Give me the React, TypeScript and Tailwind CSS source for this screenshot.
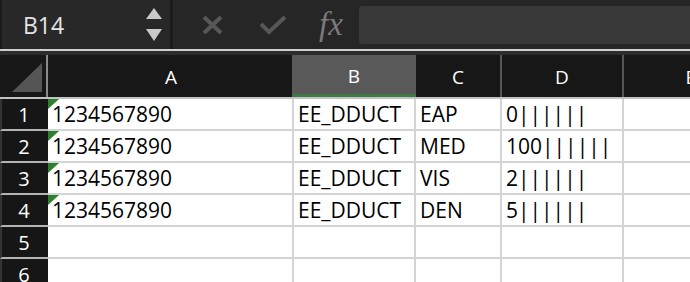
import React from "react";

// Rows of the sheet
interface SheetRow {
  id: string;
  amount: string;
  code: string;
  plan: string;
  value: string;
}

const rows: SheetRow[] = [
  { id: "1", amount: "1234567890", code: "EE_DDUCT", plan: "EAP", value: "0||||||" },
  { id: "2", amount: "1234567890", code: "EE_DDUCT", plan: "MED", value: "100||||||" },
  { id: "3", amount: "1234567890", code: "EE_DDUCT", plan: "VIS", value: "2||||||" },
  { id: "4", amount: "1234567890", code: "EE_DDUCT", plan: "DEN", value: "5||||||" },
  { id: "5", amount: "", code: "", plan: "", value: "" },
  { id: "6", amount: "", code: "", plan: "", value: "" },
];

const font = { fontFamily: '"Open Sans", "Liberation Sans", sans-serif' };

const FormulaBar = () => (
  <div className="flex h-[49px] bg-[#262626]">
    <div className="flex w-[170px] items-center border-l-2 border-[#1a1a1a] bg-[#282828] pl-[21px] pr-[8px]">
      <span className="pt-[2px] text-[23px] text-[#e4e4e4]">B14</span>
      <div className="ml-auto flex flex-col items-center gap-[10px]">
        <svg width="16" height="11" viewBox="0 0 16 11">
          <path d="M8 0 L16 11 L0 11 Z" fill="#c9c9c9" />
        </svg>
        <svg width="16" height="12" viewBox="0 0 16 12">
          <path d="M0 0 L16 0 L8 12 Z" fill="#c9c9c9" />
        </svg>
      </div>
    </div>
    <div className="w-[3px] bg-[#1b1b1b]" />
    <div className="flex flex-1 items-center">
      <svg className="ml-[29px]" width="21" height="18" viewBox="0 0 21 18">
        <path d="M2 1 L19 17 M19 1 L2 17" stroke="#575757" strokeWidth="4" />
      </svg>
      <svg className="ml-[36px]" width="28" height="20" viewBox="0 0 28 20">
        <path d="M2 9 L10 17 L26 2" stroke="#575757" strokeWidth="4" fill="none" />
      </svg>
      <span
        className="ml-[32px] text-[33px] italic leading-none text-[#7a7a7a]"
        style={{ fontFamily: '"Liberation Serif", serif' }}
      >
        fx
      </span>
      <div className="ml-[16px] h-[38px] flex-1 rounded-l-[3px] bg-[#383838]" />
    </div>
  </div>
);

const ColumnHeaders = () => (
  <div className="flex h-[44px] border-b-2 border-[#c2c2c2] bg-[#171717] text-[19px] font-medium text-white">
    <div className="relative w-[48px] border-r-2 border-[#8a8a8a]">
      <svg className="absolute left-[12px] top-[8px]" width="30" height="29" viewBox="0 0 30 29">
        <path d="M30 0 L30 29 L0 29 Z" fill="#555555" />
      </svg>
    </div>
    <div className="flex w-[244px] items-center justify-center pl-[2px] pt-[2px]">A</div>
    <div className="flex w-[124px] items-center justify-center border-b-[3px] border-[#3c7a47] bg-[#595959] pt-[4px]">
      B
    </div>
    <div className="flex w-[86px] items-center justify-center border-r-2 border-[#565656] pt-[2px]">C</div>
    <div className="flex w-[122px] items-center justify-center border-r-2 border-[#565656] pt-[2px]">D</div>
    <div className="flex flex-1 items-center justify-end pt-[2px]">
      <span className="-mr-[6px]">E</span>
    </div>
  </div>
);

const Row = ({ row }: { row: SheetRow }) => (
  <div className="flex h-[32px] text-[21px] text-black">
    <div className="flex w-[48px] items-center justify-center border-b-2 border-l-2 border-b-[#b4b4b4] border-l-[#333333] bg-[#161616] pr-[2px] pt-[2px] text-[20px] font-medium text-white">
      {row.id}
    </div>
    <div className="relative flex w-[246px] items-center border-b-2 border-r-2 border-[#d4d4d4] bg-white pl-[4px] pt-[2px]">
      {row.amount && (
        <span className="absolute left-0 top-0 h-0 w-0 border-r-[11px] border-t-[10px] border-r-transparent border-t-[#2f7f2f]" />
      )}
      {row.amount}
    </div>
    <div className="flex w-[122px] items-center border-b-2 border-r-2 border-[#d4d4d4] bg-white pl-[4px] pt-[2px]">
      {row.code}
    </div>
    <div className="flex w-[86px] items-center border-b-2 border-r-2 border-[#d4d4d4] bg-white pl-[4px] pt-[2px]">
      {row.plan}
    </div>
    <div className="flex w-[122px] items-center border-b-2 border-r-2 border-[#d4d4d4] bg-white pl-[4px] pt-[2px]">
      {row.value}
    </div>
    <div className="flex-1 border-b-2 border-[#d4d4d4] bg-white" />
  </div>
);

export default function App() {
  return (
    <div className="h-[282px] w-[690px] overflow-hidden bg-white" style={font}>
      <FormulaBar />
      <div className="h-[2px] bg-[#cfcfcf]" />
      <div className="h-[4px] bg-[#2c2c2c]" />
      <ColumnHeaders />
      {rows.map((row) => (
        <Row key={row.id} row={row} />
      ))}
    </div>
  );
}
